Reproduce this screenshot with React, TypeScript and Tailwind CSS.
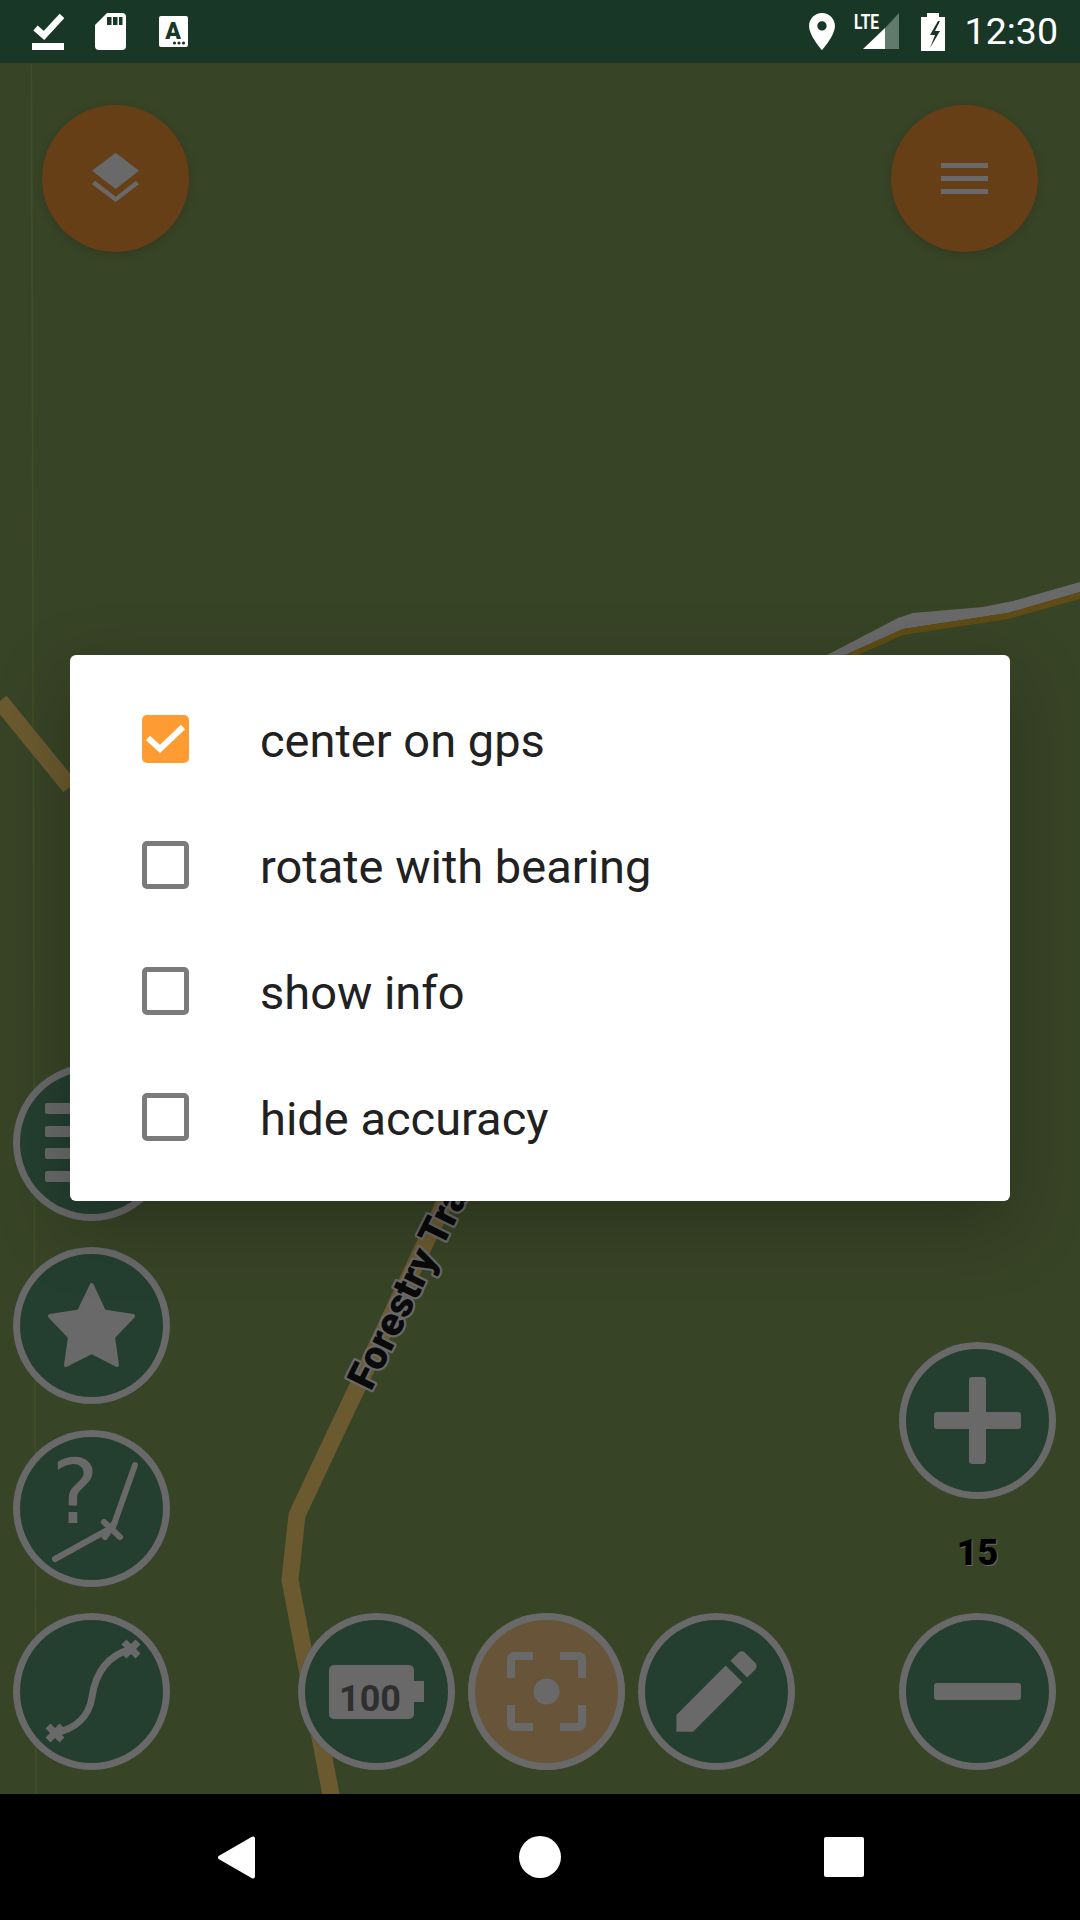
import React from "react";

const G = "#696969";

function Round({ children, fill = "bg-[#243f30]" }: { children: React.ReactNode; fill?: string }) {
  return (
    <div className={`w-[157px] h-[157px] rounded-full shadow-[inset_0_0_0_7px_#696969] ${fill}`}>
      <svg viewBox="0 0 157 157" className="w-full h-full block">{children}</svg>
    </div>
  );
}

function Fab({ children }: { children: React.ReactNode }) {
  return (
    <div className="w-[147px] h-[147px] rounded-full bg-[#673f16] shadow-[0_3px_10px_rgba(0,0,0,0.15)]">
      <svg viewBox="0 0 147 147" className="w-full h-full block">{children}</svg>
    </div>
  );
}

function Check({ checked, label }: { checked?: boolean; label: string }) {
  return (
    <div className="h-[126px] flex items-center pl-[72px]">
      {checked ? (
        <div className="w-[47px] h-[48px] rounded-[5px] bg-[#ff9b33]">
          <svg viewBox="0 0 47 48" className="w-full h-full block">
            <polyline points="6,23 18,34 41,12" fill="none" stroke="#fff" strokeWidth="6" />
          </svg>
        </div>
      ) : (
        <div className="w-[47px] h-[48px] rounded-[5px] border-[5px] border-[#7b7b7b] bg-white" />
      )}
      <span className="ml-[71px] pt-[2px] text-[47px] leading-none text-[#212121] font-['Roboto',sans-serif]">{label}</span>
    </div>
  );
}

export default function App() {
  return (
    <div className="w-[1080px] h-[1920px] flex flex-col overflow-hidden bg-black font-['Roboto',sans-serif]">
      {/* status bar */}
      <div className="h-[63px] bg-[#193726] flex items-center pl-[32px] pr-[22px] shrink-0">
        <svg width="32" height="37" viewBox="0 0 32 37" className="block">
          <polyline points="3.5,15 12,22.5 30,3" fill="none" stroke="#fff" strokeWidth="6.5" />
          <rect x="0" y="30" width="32" height="7" fill="#fff" />
        </svg>
        <svg width="31" height="37" viewBox="0 0 31 37" className="block ml-[31px]">
          <path d="M12 0H27q4 0 4 4V33q0 4-4 4H4q-4 0-4-4V12Z" fill="#fff" />
          <rect x="12" y="4" width="4.5" height="8" fill="#193726" />
          <rect x="18" y="4" width="4.5" height="8" fill="#193726" />
          <rect x="24" y="4" width="3.5" height="8" fill="#193726" />
        </svg>
        <svg width="29" height="31" viewBox="0 0 29 31" className="block ml-[33px]">
          <rect width="29" height="31" rx="2" fill="#fff" />
          <text x="14" y="22.5" textAnchor="middle" fontFamily="Roboto" fontWeight="900" fontSize="23" fill="#193726">A</text>
          <circle cx="15.5" cy="27" r="1.6" fill="#193726" />
          <circle cx="20" cy="27" r="1.6" fill="#193726" />
          <circle cx="24.5" cy="27" r="1.6" fill="#193726" />
        </svg>
        <div className="flex-1" />
        <svg width="26" height="37" viewBox="5 2 14 20" className="block">
          <path d="M12 2C8.13 2 5 5.13 5 9c0 5.25 7 13 7 13s7-7.75 7-13c0-3.87-3.13-7-7-7zm0 9.5c-1.38 0-2.5-1.12-2.5-2.5s1.12-2.5 2.5-2.5 2.5 1.12 2.5 2.5-1.12 2.5-2.5 2.5z" fill="#fff" />
        </svg>
        <svg width="45" height="45" viewBox="0 -4 45 45" className="block ml-[19px]">
          <polygon points="31,15 45,0 45,36 31,36" fill="#607a6d" />
          <polygon points="9,36 31,15 31,36" fill="#fff" />
          <text x="0" y="16" fontFamily="Roboto" fontWeight="700" fontSize="21" textLength="25" lengthAdjust="spacingAndGlyphs" fill="#fff">LTE</text>
        </svg>
        <svg width="24" height="38" viewBox="0 0 24 38" className="block ml-[22px]">
          <path d="M6 0H18V4H24V38H0V4H6Z" fill="#fff" />
          <path d="M17 8L9 22H14L9 35L19 18H14L19 8Z" fill="#193726" />
        </svg>
        <span className="ml-[20px] text-[37.5px] leading-none text-white">12:30</span>
      </div>

      {/* map */}
      <div className="relative flex-1 bg-[#384426] flex flex-col justify-between">
        <svg viewBox="0 63 1080 1731" className="absolute inset-0 w-full h-full">
          <line x1="31.5" y1="63" x2="36" y2="1794" stroke="#3f4f28" strokeWidth="1.6" />
          <polyline points="0,701 70,787" fill="none" stroke="#6b5a2f" strokeWidth="17" />
          <polyline
            points="332,1800 290,1580 297,1515 337,1430 375,1350 430,1233 470,1150"
            fill="none"
            stroke="#6b5a2f"
            strokeWidth="17"
          />
          <polygon points="827,655 898,618 913,613 983,607 1013,601 1080,582 1080,592 1008,613 903,629 845,655" fill={G} />
          <polygon points="845,655 903,629 1008,613 1080,592 1080,599 1008,619 903,635 858,655" fill="#5f4c14" />
          <text
            transform="translate(371 1392) rotate(-63.6)"
            fontFamily="Roboto"
            fontWeight="900"
            fontSize="40"
            fill="#0a0a0a"
            stroke={G}
            strokeWidth="4.5"
            strokeLinejoin="round"
            paintOrder="stroke"
          >
            Forestry Track
          </text>
        </svg>

        <div className="relative flex justify-between px-[42px] pt-[42px]">
          <Fab>
            <polygon points="73.7,47.7 97,65.7 73.7,84 50,65.7" fill={G} />
            <polygon points="53,75.7 73.7,91.7 94,75.7 97,79.3 73.7,97 50,79.3" fill={G} />
          </Fab>
          <Fab>
            <rect x="50" y="58" width="47" height="5" fill={G} />
            <rect x="50" y="71" width="47" height="5" fill={G} />
            <rect x="50" y="84" width="47" height="5" fill={G} />
          </Fab>
        </div>

        <div className="relative flex items-end pl-[13px] pr-[24px] pb-[24px]">
          <div className="flex flex-col gap-[26px]">
            <Round>
              <rect x="32" y="39" width="92" height="11" rx="2" fill={G} />
              <rect x="32" y="62" width="92" height="11" rx="2" fill={G} />
              <rect x="32" y="84" width="92" height="11" rx="2" fill={G} />
              <rect x="32" y="107" width="92" height="11" rx="2" fill={G} />
            </Round>
            <Round>
              <polygon
                points="78.7,38 91,64.5 120,69 100,90 104,118 78.7,105 53,118 57,90 37,69 66,64.5"
                fill={G}
                stroke={G}
                strokeWidth="4"
                strokeLinejoin="round"
              />
            </Round>
            <Round>
              <text x="62" y="93" textAnchor="middle" fontFamily="'DejaVu Sans'" fontSize="89" fill={G}>?</text>
              <polyline points="122,35 100,97 42,129" fill="none" stroke={G} strokeWidth="6" strokeLinecap="round" strokeLinejoin="round" />
              <line x1="91" y1="92" x2="107" y2="107" stroke={G} strokeWidth="6" strokeLinecap="round" />
              <line x1="102" y1="92" x2="92" y2="107" stroke={G} strokeWidth="6" strokeLinecap="round" />
            </Round>
            <Round>
              <path d="M42 120C62 116 76 104 79 84C83 56 97 42 118 36" fill="none" stroke={G} strokeWidth="7" />
              <path d="M35 113L49 127M49 113L35 127" stroke={G} strokeWidth="7" />
              <path d="M111 29L125 43M125 29L111 43" stroke={G} strokeWidth="7" />
            </Round>
          </div>

          <div className="flex gap-[13px] ml-[128px]">
            <Round>
              <rect x="31" y="52" width="85" height="54" rx="5" fill={G} />
              <rect x="116" y="68" width="10" height="21" fill={G} />
              <text x="72" y="98" textAnchor="middle" fontFamily="Roboto" fontWeight="700" fontSize="36" fill="#2f2f2f">100</text>
            </Round>
            <Round fill="bg-[#685539]">
              <path d="M43 65V47Q43 43 47 43H65M92 43H110Q114 43 114 47V65M114 92V110Q114 114 110 114H92M65 114H47Q43 114 43 110V92" fill="none" stroke={G} strokeWidth="8" />
              <circle cx="78.5" cy="78.5" r="13" fill={G} />
            </Round>
            <Round>
              <svg x="25" y="25" width="107" height="107" viewBox="0 0 24 24">
                <path d="M3 17.25V21h3.75L17.81 9.94l-3.75-3.75L3 17.25zM20.71 7.04c.39-.39.39-1.02 0-1.41l-2.34-2.34c-.39-.39-1.02-.39-1.41 0l-1.83 1.83 3.75 3.75 1.83-1.83z" fill={G} />
              </svg>
            </Round>
          </div>

          <div className="ml-auto flex flex-col items-center">
            <Round>
              <rect x="70" y="35" width="17" height="87" rx="3" fill={G} />
              <rect x="35" y="70" width="87" height="17" rx="3" fill={G} />
            </Round>
            <div className="h-[114px] flex items-center pb-[7px] text-[36px] font-black leading-none text-black [text-shadow:1px_1px_0_#696969]">15</div>
            <Round>
              <rect x="35" y="70" width="87" height="17" rx="3" fill={G} />
            </Round>
          </div>
        </div>

        {/* dialog */}
        <div className="absolute left-[70px] top-[592px] w-[940px] h-[546px] bg-white rounded-[6px] py-[21px] shadow-[0_24px_72px_rgba(0,0,0,0.25)]">
          <Check checked label="center on gps" />
          <Check label="rotate with bearing" />
          <Check label="show info" />
          <Check label="hide accuracy" />
        </div>
      </div>

      {/* nav bar */}
      <div className="h-[126px] bg-black grid grid-cols-3 items-center px-[84px] shrink-0">
        <div className="flex justify-center">
          <svg width="37" height="43" viewBox="0 0 37 43" className="block">
            <path d="M2 21.5L35 2.5V40.5Z" fill="#fff" stroke="#fff" strokeWidth="4" strokeLinejoin="round" />
          </svg>
        </div>
        <div className="flex justify-center">
          <div className="w-[42px] h-[42px] rounded-full bg-white" />
        </div>
        <div className="flex justify-center">
          <div className="w-[40px] h-[40px] rounded-[2px] bg-white" />
        </div>
      </div>
    </div>
  );
}
